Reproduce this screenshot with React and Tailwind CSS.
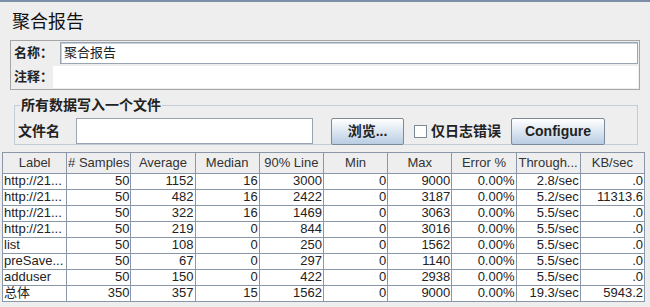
import React from 'react';

const font = { fontFamily: '"Liberation Sans", Arial, "Noto Sans CJK SC", sans-serif' };

const columns = ['Label', '# Samples', 'Average', 'Median', '90% Line', 'Min', 'Max', 'Error %', 'Through...', 'KB/sec'];

const rows = [
  ['http://21...', '50', '1152', '16', '3000', '0', '9000', '0.00%', '2.8/sec', '.0'],
  ['http://21...', '50', '482', '16', '2422', '0', '3187', '0.00%', '5.2/sec', '11313.6'],
  ['http://21...', '50', '322', '16', '1469', '0', '3063', '0.00%', '5.5/sec', '.0'],
  ['http://21...', '50', '219', '0', '844', '0', '3016', '0.00%', '5.5/sec', '.0'],
  ['list', '50', '108', '0', '250', '0', '1562', '0.00%', '5.5/sec', '.0'],
  ['preSave...', '50', '67', '0', '297', '0', '1140', '0.00%', '5.5/sec', '.0'],
  ['adduser', '50', '150', '0', '422', '0', '2938', '0.00%', '5.5/sec', '.0'],
  ['总体', '350', '357', '15', '1562', '0', '9000', '0.00%', '19.3/sec', '5943.2'],
];

const SwingButton = ({ children, className }) => (
  <button
    className={`h-[27px] border border-[#7a8a99] rounded-[2px] bg-gradient-to-b from-[#ffffff] to-[#b9cde3] text-[14px] font-bold text-[#222] ${className}`}
  >
    {children}
  </button>
);

export default function App() {
  return (
    <div className="w-[650px] h-[307px] bg-[#eeeeee] border-t-2 border-[#7d8fa6] overflow-hidden text-[#222]" style={font}>
      <div className="pl-[12px] pt-[9px] h-[38px] text-[18px] leading-[23px] text-[#111]">聚合报告</div>

      <div className="ml-[10px] w-[630px] border border-[#a6a6a6]">
        <div className="flex items-center h-[24px]">
          <span className="w-[49px] pl-[3px] text-[13px] font-bold">名称：</span>
          <div className="flex-1 h-[22px] mr-[1px] bg-white border border-[#9aa5b3] shadow-[inset_1px_1px_0_#c9d1db] text-[13px] leading-[20px] pl-[3px]">聚合报告</div>
        </div>
        <div className="flex items-center h-[24px]">
          <span className="w-[42px] pl-[3px] text-[13px] font-bold">注释：</span>
          <div className="flex-1 h-[22px] mr-[1px] bg-white"></div>
        </div>
      </div>

      <fieldset className="ml-[14px] mt-[7px] w-[624px] h-[48px] border border-[#c4ccd6] pl-[3px]">
        <legend className="ml-[2px] px-[1px] text-[14px] font-bold leading-[16px]">所有数据写入一个文件</legend>
        <div className="flex items-center h-[28px] mt-[4px]">
          <span className="w-[58px] text-[14px] font-bold">文件名</span>
          <div className="w-[237px] h-[26px] bg-white border border-[#9aa5b3]"></div>
          <SwingButton className="ml-[18px] w-[73px]">浏览...</SwingButton>
          <span className="ml-[10px] w-[13px] h-[13px] bg-white border border-[#7a8a99]"></span>
          <span className="ml-[4px] text-[14px] font-bold">仅日志错误</span>
          <SwingButton className="ml-[10px] w-[94px]">Configure</SwingButton>
        </div>
      </fieldset>

      <table className="ml-[2px] mt-[7px] w-[643px] table-fixed border-collapse text-[13px]">
        <thead>
          <tr>
            {columns.map((c) => (
              <th key={c} className="h-[20px] p-0 border border-[#8a97a8] bg-[#eeeeee] font-normal text-[#333] text-center whitespace-nowrap overflow-hidden">
                {c}
              </th>
            ))}
          </tr>
        </thead>
        <tbody>
          {rows.map((r, i) => (
            <tr key={i}>
              {r.map((v, j) => (
                <td
                  key={j}
                  className={`h-[16px] p-0 leading-[14px] border border-[#8a97a8] bg-white whitespace-nowrap overflow-hidden ${j === 0 ? 'text-left pl-[1px]' : 'text-right pr-[1px]'}`}
                >
                  {v}
                </td>
              ))}
            </tr>
          ))}
        </tbody>
      </table>
    </div>
  );
}
